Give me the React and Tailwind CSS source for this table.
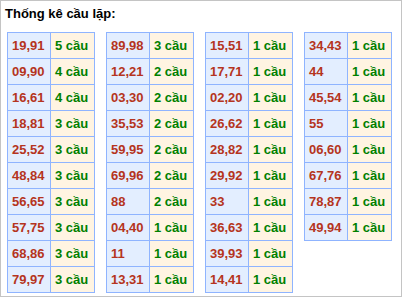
import React from 'react';

const tables = [
    [['19,91', 5], ['09,90', 4], ['16,61', 4], ['18,81', 3], ['25,52', 3], ['48,84', 3], ['56,65', 3], ['57,75', 3], ['68,86', 3], ['79,97', 3]],
    [['89,98', 3], ['12,21', 2], ['03,30', 2], ['35,53', 2], ['59,95', 2], ['69,96', 2], ['88', 2], ['04,40', 1], ['11', 1], ['13,31', 1]],
    [['15,51', 1], ['17,71', 1], ['02,20', 1], ['26,62', 1], ['28,82', 1], ['29,92', 1], ['33', 1], ['36,63', 1], ['39,93', 1], ['14,41', 1]],
    [['34,43', 1], ['44', 1], ['45,54', 1], ['55', 1], ['06,60', 1], ['67,76', 1], ['78,87', 1], ['49,94', 1]],
];

const CauTable = ({ rows }) => (
    <div className="grid grid-cols-[43px_44px] border-l border-t border-[#8fb4ff] self-start">
        {rows.map(([pair, count]) => (
            <React.Fragment key={pair}>
                <div className="h-[26px] flex items-center pl-[4px] bg-[#e3eeff] border-r border-b border-[#8fb4ff] text-[#b53420]">
                    {pair}
                </div>
                <div className="h-[26px] flex items-center pl-[4px] bg-[#fff4e2] border-r border-b border-[#8fb4ff] text-[#008000]">
                    {count} cầu
                </div>
            </React.Fragment>
        ))}
    </div>
);

export default function App() {
    return (
        <div
            className="w-[402px] h-[297px] border border-[#c4c4c4] bg-white font-bold text-[13px] leading-[15px]"
            style={{ fontFamily: '"Liberation Sans", Arial, sans-serif' }}
        >
            <div className="pl-[4px] pt-[5px] h-[31px] text-black">Thống kê cầu lặp:</div>
            <div className="flex gap-[11px] pl-[6px]">
                {tables.map((rows, i) => (
                    <CauTable key={i} rows={rows} />
                ))}
            </div>
        </div>
    );
}
